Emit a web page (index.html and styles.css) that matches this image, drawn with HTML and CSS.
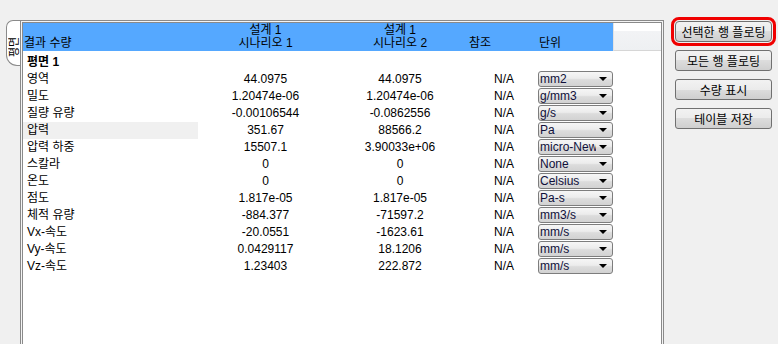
FILE: index.html
```html
<!DOCTYPE html>
<html lang="ko">
<head>
    <meta charset="UTF-8">
    <title>결과 수량</title>
    <link rel="stylesheet" href="styles.css">
</head>
<body>
    <div class="wrap">
        <div class="tab"><span>평면</span></div>

        <div class="panel">
            <div class="inner">
                <div class="head">
                    <div class="hcell name">결과 수량</div>
                    <div class="hcell mid"><div>설계 1</div><div>시나리오 1</div></div>
                    <div class="hcell mid"><div>설계 1</div><div>시나리오 2</div></div>
                    <div class="hcell href">참조</div>
                    <div class="hcell unit">단위</div>
                    <div class="hfill"></div>
                </div>

                <div class="rows">
                    <div class="row">
                        <div class="name bold">평면 1</div>
                    </div>
                    <div class="row">
                        <div class="name">영역</div>
                        <div class="val">44.0975</div>
                        <div class="val">44.0975</div>
                        <div class="ref">N/A</div>
                        <div class="unit"><div class="combo"><span>mm2</span><i></i></div></div>
                    </div>
                    <div class="row">
                        <div class="name">밀도</div>
                        <div class="val">1.20474e-06</div>
                        <div class="val">1.20474e-06</div>
                        <div class="ref">N/A</div>
                        <div class="unit"><div class="combo"><span>g/mm3</span><i></i></div></div>
                    </div>
                    <div class="row">
                        <div class="name">질량 유량</div>
                        <div class="val">-0.00106544</div>
                        <div class="val">-0.0862556</div>
                        <div class="ref">N/A</div>
                        <div class="unit"><div class="combo"><span>g/s</span><i></i></div></div>
                    </div>
                    <div class="row">
                        <div class="name selected">압력</div>
                        <div class="val">351.67</div>
                        <div class="val">88566.2</div>
                        <div class="ref">N/A</div>
                        <div class="unit"><div class="combo"><span>Pa</span><i></i></div></div>
                    </div>
                    <div class="row">
                        <div class="name">압력 하중</div>
                        <div class="val">15507.1</div>
                        <div class="val">3.90033e+06</div>
                        <div class="ref">N/A</div>
                        <div class="unit"><div class="combo"><span>micro-New</span><i></i></div></div>
                    </div>
                    <div class="row">
                        <div class="name">스칼라</div>
                        <div class="val">0</div>
                        <div class="val">0</div>
                        <div class="ref">N/A</div>
                        <div class="unit"><div class="combo"><span>None</span><i></i></div></div>
                    </div>
                    <div class="row">
                        <div class="name">온도</div>
                        <div class="val">0</div>
                        <div class="val">0</div>
                        <div class="ref">N/A</div>
                        <div class="unit"><div class="combo"><span>Celsius</span><i></i></div></div>
                    </div>
                    <div class="row">
                        <div class="name">점도</div>
                        <div class="val">1.817e-05</div>
                        <div class="val">1.817e-05</div>
                        <div class="ref">N/A</div>
                        <div class="unit"><div class="combo"><span>Pa-s</span><i></i></div></div>
                    </div>
                    <div class="row">
                        <div class="name">체적 유량</div>
                        <div class="val">-884.377</div>
                        <div class="val">-71597.2</div>
                        <div class="ref">N/A</div>
                        <div class="unit"><div class="combo"><span>mm3/s</span><i></i></div></div>
                    </div>
                    <div class="row">
                        <div class="name">Vx-속도</div>
                        <div class="val">-20.0551</div>
                        <div class="val">-1623.61</div>
                        <div class="ref">N/A</div>
                        <div class="unit"><div class="combo"><span>mm/s</span><i></i></div></div>
                    </div>
                    <div class="row">
                        <div class="name">Vy-속도</div>
                        <div class="val">0.0429117</div>
                        <div class="val">18.1206</div>
                        <div class="ref">N/A</div>
                        <div class="unit"><div class="combo"><span>mm/s</span><i></i></div></div>
                    </div>
                    <div class="row">
                        <div class="name">Vz-속도</div>
                        <div class="val">1.23403</div>
                        <div class="val">222.872</div>
                        <div class="ref">N/A</div>
                        <div class="unit"><div class="combo"><span>mm/s</span><i></i></div></div>
                    </div>
                </div>
            </div>
        </div>

        <div class="side">
            <button class="btn focused">선택한 행 플로팅</button>
            <button class="btn">모든 행 플로팅</button>
            <button class="btn">수량 표시</button>
            <button class="btn">테이블 저장</button>
        </div>
    </div>
</body>
</html>
```

FILE: styles.css
```css
html, body {
    margin: 0;
    padding: 0;
    height: 100%;
    overflow: hidden;
}

body {
    background-color: #f0f0f0;
    font-family: 'Liberation Sans', 'Noto Sans CJK KR', sans-serif;
    font-size: 12px;
    color: #000;
}

.wrap {
    display: flex;
    align-items: flex-start;
    padding: 20px 0 0 6px;
}

/* vertical tab on the left */
.tab {
    width: 14px;
    height: 46px;
    box-sizing: border-box;
    border: 1px solid #8a8a8a;
    border-right: none;
    border-radius: 7px 0 0 11px;
    background-color: #fff;
    display: flex;
    justify-content: center;
    padding-top: 12px;
}

.tab span {
    writing-mode: vertical-rl;
    text-orientation: sideways;
    transform: rotate(180deg);
    font-size: 11px;
    line-height: 12px;
    height: 24px;
    text-align: left;
}

.panel {
    width: 644px;
    height: 340px;
    box-sizing: border-box;
    border: 1px solid #8a8a8a;
    padding: 1px;
    background-color: #f4f4f4;
}

.inner {
    height: 100%;
    box-sizing: border-box;
    border: 1px solid #8a8a8a;
    background-color: #fff;
}

/* table header */
.head {
    display: grid;
    grid-template-columns: 175px 135px 134px 71px 75px 1fr;
    height: 28px;
}

.hcell {
    background-color: #55a8ff;
    line-height: 13px;
    padding: 1px 0 1px;
    box-sizing: border-box;
    display: flex;
    flex-direction: column;
    justify-content: flex-end;
    white-space: nowrap;
}

.hcell.name {
    padding-left: 1px;
}

.hcell.mid {
    text-align: center;
}

.hcell.href {
    padding-left: 2px;
}

.hcell.unit {
    padding-left: 1px;
}

.hfill {
    background: linear-gradient(to bottom, #fff 0, #fff 30%, #f2f3f5 31%, #eef0f2 100%);
    border-bottom: 1px solid #d6d6d6;
    border-left: 1px solid #e3e3e3;
    height: 27px;
}

/* table rows */
.rows {
    padding-top: 3px;
}

.row {
    display: grid;
    grid-template-columns: 175px 135px 134px 71px 75px;
    height: 17px;
    line-height: 17px;
}

.name {
    padding-left: 4px;
    white-space: nowrap;
}

.name.bold {
    font-weight: bold;
}

.name.selected {
    background-color: #f0f0f0;
}

.val {
    text-align: center;
}

.ref {
    text-align: right;
    padding-right: 24px;
}

.combo {
    width: 75px;
    height: 16px;
    box-sizing: border-box;
    border: 1px solid #7d7d7d;
    border-radius: 3px;
    background: linear-gradient(to bottom, #f6f6f6 0%, #ececec 45%, #dcdcdc 55%, #d2d2d2 100%);
    display: flex;
    align-items: center;
    line-height: 14px;
    color: #10103a;
}

.combo span {
    flex: 1;
    overflow: hidden;
    white-space: nowrap;
    padding-left: 1px;
}

.combo i {
    width: 0;
    height: 0;
    border-left: 4px solid transparent;
    border-right: 4px solid transparent;
    border-top: 4px solid #000;
    margin: 0 5px 0 3px;
}

/* buttons on the right */
.side {
    display: flex;
    flex-direction: column;
    gap: 8px;
    margin-left: 11px;
    padding-top: 1px;
}

.btn {
    width: 97px;
    height: 21px;
    padding: 0;
    border: 1px solid #707070;
    border-radius: 3px;
    background: linear-gradient(to bottom, #f2f2f2 0%, #ebebeb 50%, #dddddd 50%, #cfcfcf 100%);
    font-family: 'Noto Sans CJK KR', 'Liberation Sans', sans-serif;
    font-size: 12px;
    line-height: 17px;
    color: #000;
}

.btn.focused {
    outline: 3px solid #f00000;
    outline-offset: 1px;
    border-radius: 4px;
}
```
